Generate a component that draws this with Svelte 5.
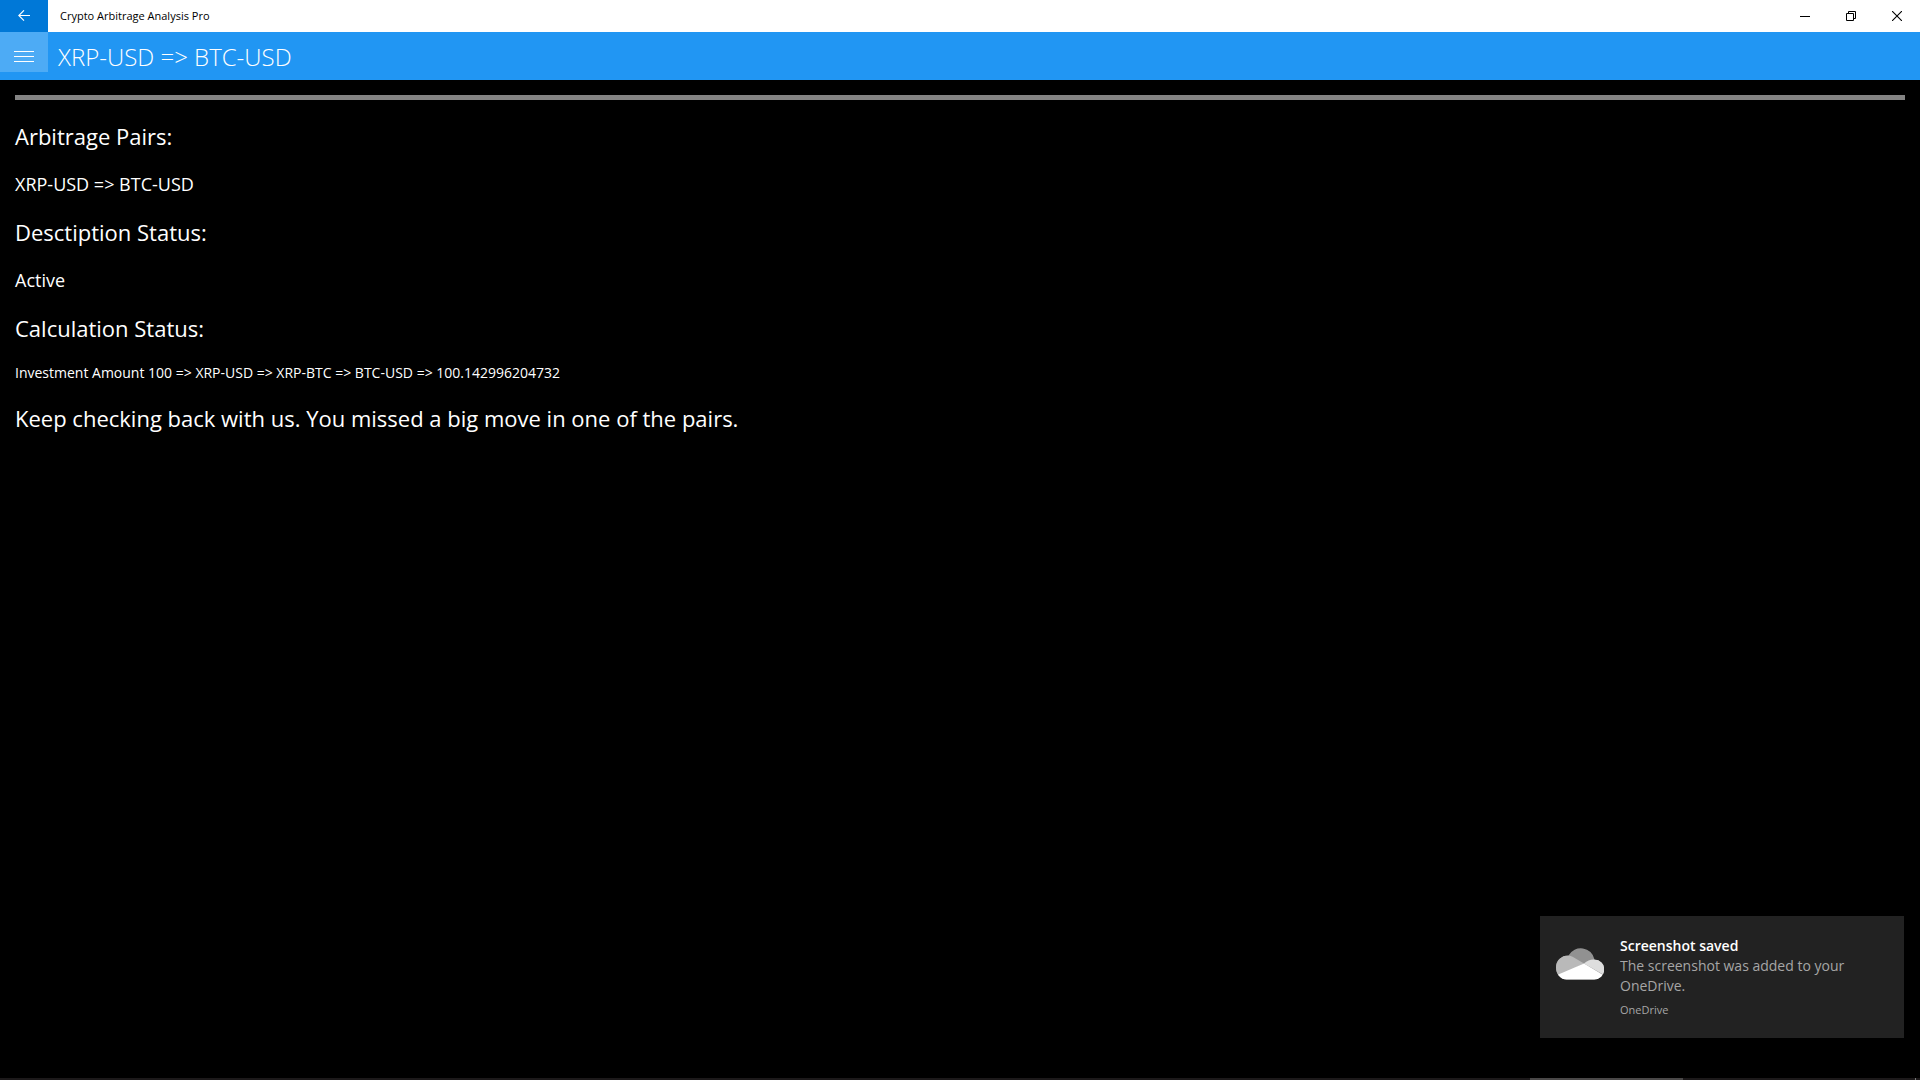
<script>
  const appName = 'Crypto Arbitrage Analysis Pro';
  const pair = 'XRP-USD => BTC-USD';
  const sections = [
    { title: 'Arbitrage Pairs:', text: pair },
    { title: 'Desctiption Status:', text: 'Active' },
    {
      title: 'Calculation Status:',
      text: 'Investment Amount 100 => XRP-USD => XRP-BTC => BTC-USD => 100.142996204732',
      small: true
    }
  ];
</script>

<div class="window">
  <header class="titlebar">
    <button class="back" aria-label="Back">
      <svg width="12" height="12" viewBox="0 0 12 12" fill="none" stroke="#fff" stroke-width="1.1">
        <path d="M12 5.500H.8M6 .3.8 5.500 6 10.700" />
      </svg>
    </button>
    <span class="app-name">{appName}</span>
    <div class="controls">
      <button aria-label="Minimize">
        <svg width="10" height="10" viewBox="0 0 10 10"><path d="M0 5.5h10" stroke="#000" /></svg>
      </button>
      <button aria-label="Restore">
        <svg width="10" height="10" viewBox="0 0 10 10" fill="none" stroke="#000">
          <path d="M.5 2.5h7v7h-7zM2.5 2.5v-2h7v7h-2" />
        </svg>
      </button>
      <button aria-label="Close">
        <svg width="10" height="10" viewBox="0 0 10 10" fill="none" stroke="#000" stroke-width="1.1">
          <path d="M0 0l10 10M10 0 0 10" />
        </svg>
      </button>
    </div>
  </header>

  <nav class="navbar">
    <button class="menu" aria-label="Menu">
      <svg width="20" height="12" viewBox="0 0 20 12" stroke="#fff">
        <path d="M0 .5h20M0 5.5h20M0 10.5h20" />
      </svg>
    </button>
    <h1>{pair}</h1>
  </nav>

  <main>
    <div class="rule"></div>
    {#each sections as section}
      <h2>{section.title}</h2>
      <p class:small={section.small}>{section.text}</p>
    {/each}
    <h2>Keep checking back with us. You missed a big move in one of the pairs.</h2>
  </main>

  <aside class="toast">
    <svg class="cloud" width="48" height="32" viewBox="0 0 48 32">
      <defs>
        <clipPath id="cloud-shape">
          <path d="M10.500 31.500A10.500 12 0 0 1 0 19.500 12 12 0 0 1 12.500 7.500 14 14 0 0 1 38.500 11.500 10 10 0 0 1 38 31.500Z" />
        </clipPath>
      </defs>
      <g clip-path="url(#cloud-shape)">
        <path d="M0 0h48v32H0z" fill="#919191" />
        <path d="M0 32V7.500h12Q15 7.500 17 9L28 15.500 3 28z" fill="#b9b9b9" />
        <path d="M28 15.500Q33 11 38.500 11.500H48V27z" fill="#dedede" />
        <path d="M0 27.500 28 15.500 48 27.500V32H0z" fill="#fff" />
      </g>
    </svg>
    <div class="message">
      <strong>Screenshot saved</strong>
      <span class="body">The screenshot was added to your OneDrive.</span>
      <span class="source">OneDrive</span>
    </div>
  </aside>

  <footer class="taskbar"><span class="active-task"></span><span class="peek"></span></footer>
</div>

<style>
  :global(body) {
    background: #000;
  }
  .window {
    position: relative;
    display: flex;
    flex-direction: column;
    min-height: 100vh;
    background: #000;
    color: #fff;
    font-family: 'Open Sans', 'Noto Sans', sans-serif;
  }
  button {
    display: flex;
    align-items: center;
    justify-content: center;
    padding: 0;
    border: 0;
    background: none;
  }
  h1,
  h2,
  p {
    margin: 0;
    font-weight: 400;
  }
  .titlebar {
    display: flex;
    height: 32px;
    background: #fff;
    color: #000;
  }
  .back {
    width: 48px;
    background: #0078d7;
  }
  .app-name {
    flex: 1;
    padding-left: 12px;
    font-size: 11px;
    line-height: 32px;
  }
  .controls {
    display: flex;
  }
  .controls button {
    width: 46px;
  }
  .navbar {
    display: flex;
    height: 48px;
    background: #2196f3;
  }
  .menu {
    width: 48px;
    height: 40px;
    padding-top: 9px;
    background: #4dabf5;
  }
  h1 {
    padding-left: 10px;
    font-size: 24px;
    font-weight: 300;
    line-height: 50px;
  }
  main {
    display: flex;
    flex: 1;
    flex-direction: column;
    gap: 20px;
    padding: 15px;
  }
  .rule {
    height: 5px;
    margin-bottom: 1px;
    background: #848484;
  }
  h2 {
    font-size: 22px;
    line-height: 30px;
  }
  p {
    font-size: 18px;
    line-height: 26px;
  }
  p.small {
    font-size: 14px;
    line-height: 20px;
  }
  .toast {
    position: absolute;
    right: 16px;
    bottom: 42px;
    display: flex;
    gap: 16px;
    box-sizing: border-box;
    width: 364px;
    padding: 20px 16px 18px;
    background: #222;
  }
  .cloud {
    flex: none;
    margin-top: 12px;
  }
  .message {
    display: flex;
    flex: 1;
    flex-direction: column;
    font-size: 14px;
    line-height: 20px;
  }
  .message strong {
    font-weight: 600;
  }
  .body {
    color: #a6a6a6;
  }
  .source {
    margin-top: 4px;
    color: #a6a6a6;
    font-size: 11px;
  }
  .taskbar {
    display: flex;
    justify-content: flex-end;
    height: 2px;
    background: #1c191a;
  }
  .active-task {
    width: 153px;
    margin-right: 232px;
    background: #4a4848;
  }
  .peek {
    width: 1px;
    margin-right: 4px;
    background: #777;
  }
</style>
